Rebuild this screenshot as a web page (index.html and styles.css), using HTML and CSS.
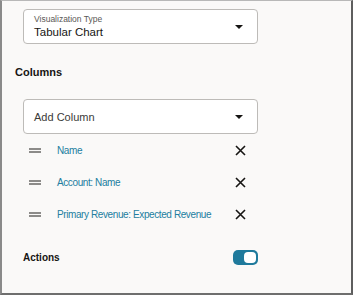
FILE: index.html
```
<!DOCTYPE html>
<html lang="en">
<head>
  <meta charset="UTF-8">
  <title>Tabular Chart Settings</title>
  <link rel="stylesheet" href="styles.css">
</head>
<body>
  <div class="panel">
    <div class="select-field">
      <div class="select-text">
        <span class="select-label">Visualization Type</span>
        <span class="select-value">Tabular Chart</span>
      </div>
      <span class="caret"></span>
    </div>

    <h3 class="section-title">Columns</h3>

    <div class="select-field add-column">
      <span class="select-placeholder">Add Column</span>
      <span class="caret"></span>
    </div>

    <ul class="column-list">
      <li class="column-item">
        <span class="handle"></span>
        <a href="#" class="column-name">Name</a>
        <span class="remove">
          <svg width="11" height="11" viewBox="0 0 11 11"><path d="M1 1L10 10M10 1L1 10" stroke="#161513" stroke-width="1.6"/></svg>
        </span>
      </li>
      <li class="column-item">
        <span class="handle"></span>
        <a href="#" class="column-name">Account: Name</a>
        <span class="remove">
          <svg width="11" height="11" viewBox="0 0 11 11"><path d="M1 1L10 10M10 1L1 10" stroke="#161513" stroke-width="1.6"/></svg>
        </span>
      </li>
      <li class="column-item">
        <span class="handle"></span>
        <a href="#" class="column-name">Primary Revenue: Expected Revenue</a>
        <span class="remove">
          <svg width="11" height="11" viewBox="0 0 11 11"><path d="M1 1L10 10M10 1L1 10" stroke="#161513" stroke-width="1.6"/></svg>
        </span>
      </li>
    </ul>

    <div class="actions-row">
      <span class="actions-label">Actions</span>
      <span class="toggle"><span class="knob"></span></span>
    </div>
  </div>
</body>
</html>
```

FILE: styles.css
```
* {
  margin: 0;
  padding: 0;
  box-sizing: border-box;
}

body {
  font-family: 'Liberation Sans', Arial, sans-serif;
  background-color: #fff;
}

.panel {
  width: 353px;
  height: 295px;
  background-color: #faf9f8;
  border: 1px solid #7a7a7a;
  border-top-color: #b8b8b8;
  border-left: 2px solid #8a8a8a;
  border-bottom: 2px solid #6e6e6e;
  border-right: 2px solid #5e5e5e;
  padding: 8px 0 0 21px;
}

.select-field {
  width: 235px;
  height: 35px;
  background-color: #fff;
  border: 1px solid #bdbbb8;
  border-radius: 4px;
  display: flex;
  align-items: center;
  justify-content: space-between;
  padding: 0 14px 0 10px;
}

.select-text {
  display: flex;
  flex-direction: column;
}

.select-label {
  font-size: 8.5px;
  color: #5a5856;
  line-height: 11px;
}

.select-value {
  font-size: 11.5px;
  color: #161513;
  line-height: 14px;
}

.caret {
  width: 0;
  height: 0;
  border-left: 4px solid transparent;
  border-right: 4px solid transparent;
  border-top: 4px solid #161513;
}

.section-title {
  font-size: 11px;
  font-weight: bold;
  color: #161513;
  line-height: 16px;
  margin: 20px 0 19px -8px;
}

.select-placeholder {
  font-size: 11px;
  color: #3b3a38;
}

.column-list {
  list-style: none;
  width: 235px;
}

.column-item {
  height: 32px;
  display: flex;
  align-items: center;
  padding-left: 6px;
}

.handle {
  width: 12px;
  height: 5px;
  border-top: 2px solid #8c8b89;
  border-bottom: 2px solid #8c8b89;
}

.column-name {
  flex: 1;
  margin-left: 16px;
  font-size: 10px;
  letter-spacing: -0.4px;
  color: #227ea0;
  text-decoration: none;
}

.remove {
  display: flex;
  margin-right: 12px;
}

.actions-row {
  width: 235px;
  height: 32px;
  margin-top: 11px;
  display: flex;
  align-items: center;
  justify-content: space-between;
}

.actions-label {
  font-size: 10px;
  font-weight: bold;
  color: #161513;
}

.toggle {
  width: 25px;
  height: 15px;
  border-radius: 5px;
  background-color: #1f7a9c;
  display: flex;
  align-items: center;
  justify-content: flex-end;
  padding: 2px;
}

.knob {
  width: 12px;
  height: 11px;
  border-radius: 4px;
  background-color: #fff;
}
```
